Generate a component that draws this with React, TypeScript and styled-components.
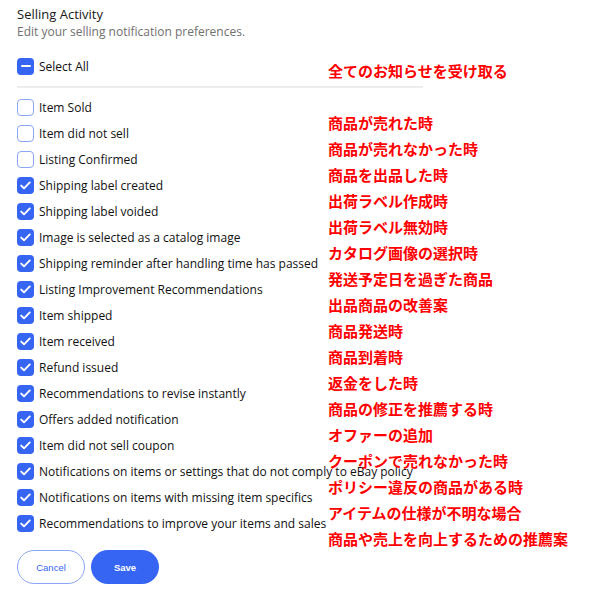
import React from 'react';
import styled, { createGlobalStyle } from 'styled-components';

const GlobalStyle = createGlobalStyle`
  body {
    margin: 0;
    background: #ffffff;
    font-family: "Open Sans", "Liberation Sans", sans-serif;
    color: #191919;
  }
`;

interface Option {
  label: string;
  note: string;
  checked: boolean;
}

const OPTIONS: Option[] = [
  { label: 'Item Sold', note: '商品が売れた時', checked: false },
  { label: 'Item did not sell', note: '商品が売れなかった時', checked: false },
  { label: 'Listing Confirmed', note: '商品を出品した時', checked: false },
  { label: 'Shipping label created', note: '出荷ラベル作成時', checked: true },
  { label: 'Shipping label voided', note: '出荷ラベル無効時', checked: true },
  { label: 'Image is selected as a catalog image', note: 'カタログ画像の選択時', checked: true },
  { label: 'Shipping reminder after handling time has passed', note: '発送予定日を過ぎた商品', checked: true },
  { label: 'Listing Improvement Recommendations', note: '出品商品の改善案', checked: true },
  { label: 'Item shipped', note: '商品発送時', checked: true },
  { label: 'Item received', note: '商品到着時', checked: true },
  { label: 'Refund issued', note: '返金をした時', checked: true },
  { label: 'Recommendations to revise instantly', note: '商品の修正を推薦する時', checked: true },
  { label: 'Offers added notification', note: 'オファーの追加', checked: true },
  { label: 'Item did not sell coupon', note: 'クーポンで売れなかった時', checked: true },
  { label: 'Notifications on items or settings that do not comply to eBay policy', note: 'ポリシー違反の商品がある時', checked: true },
  { label: 'Notifications on items with missing item specifics', note: 'アイテムの仕様が不明な場合', checked: true },
  { label: 'Recommendations to improve your items and sales', note: '商品や売上を向上するための推薦案', checked: true },
];

type BoxState = 'on' | 'off' | 'mixed';

const CheckBox = ({ state }: { state: BoxState }) => (
  <Box $state={state}>
    {state === 'on' && (
      <svg width="11" height="9" viewBox="0 0 11 9">
        <polyline points="1.2,4.6 4,7.3 9.8,1.4" fill="none" stroke="#fff" strokeWidth="1.9" strokeLinecap="round" strokeLinejoin="round" />
      </svg>
    )}
    {state === 'mixed' && <Dash />}
  </Box>
);

export default function App() {
  return (
    <>
      <GlobalStyle />
      <Panel>
        <Title>Selling Activity</Title>
        <Subtitle>Edit your selling notification preferences.</Subtitle>
        <SelectAllRow>
          <CheckBox state="mixed" />
          <Label>Select All</Label>
        </SelectAllRow>
        <Divider />
        <List>
          {OPTIONS.map((o) => (
            <Row key={o.label}>
              <CheckBox state={o.checked ? 'on' : 'off'} />
              <Label>{o.label}</Label>
            </Row>
          ))}
        </List>
        <Actions>
          <CancelButton>Cancel</CancelButton>
          <SaveButton>Save</SaveButton>
        </Actions>

        {/* red annotations laid over the list */}
        <Notes>
          <NoteHead>全てのお知らせを受け取る</NoteHead>
          {OPTIONS.map((o) => (
            <Note key={o.note}>{o.note}</Note>
          ))}
        </Notes>
      </Panel>
    </>
  );
}

const Panel = styled.div`
  position: relative;
  display: flex;
  flex-direction: column;

  width: 592px;
  height: 589px;
  padding: 5px 0 0 17px;
  box-sizing: border-box;
`;
const Title = styled.div`
  font-size: 13px;
  line-height: 18px;
  color: #191919;
`;
const Subtitle = styled.div`
  font-size: 12px;
  line-height: 17px;
  color: #707070;
`;
const SelectAllRow = styled.div`
  display: flex;
  align-items: center;
  gap: 5px;

  height: 26px;
  margin-top: 13px;
`;
const Divider = styled.div`
  width: 406px;
  height: 2px;
  margin-top: 7px;
  background: #ececec;
`;
const List = styled.div`
  display: flex;
  flex-direction: column;
  margin-top: 6px;
`;
const Row = styled.div`
  display: flex;
  align-items: center;
  gap: 5px;

  height: 26px;
`;
const Box = styled.div<{ $state: BoxState }>`
  display: flex;
  align-items: center;
  justify-content: center;
  flex-shrink: 0;

  width: 17px;
  height: 17px;
  box-sizing: border-box;
  border-radius: 4px;

  border: ${(p) => (p.$state === 'off' ? '1.5px solid #8aa6f7' : 'none')};
  background: ${(p) => (p.$state === 'off' ? '#ffffff' : '#3665f3')};
`;
const Dash = styled.div`
  width: 10px;
  height: 2px;
  border-radius: 1px;
  background: #ffffff;
`;
const Label = styled.span`
  font-size: 12px;
  color: #111111;
  white-space: nowrap;
`;
const Actions = styled.div`
  display: flex;
  gap: 6px;
  margin-top: 14px;
`;
const Pill = styled.button`
  width: 68px;
  height: 34px;
  border-radius: 17px;
  box-sizing: border-box;

  font-family: "Liberation Sans", sans-serif;
  font-size: 9.5px;
  cursor: pointer;
`;
const CancelButton = styled(Pill)`
  border: 1.5px solid #8aa6f7;
  background: #ffffff;
  color: #3665f3;
`;
const SaveButton = styled(Pill)`
  border: none;
  background: #3665f3;
  color: #ffffff;
  font-weight: bold;
`;
const Notes = styled.div`
  position: absolute;
  left: 328px;
  top: 58px;

  display: flex;
  flex-direction: column;

  font-family: "Noto Sans CJK JP", sans-serif;
  font-size: 15px;
  font-weight: 700;
  line-height: 26px;
  color: #ff0000;
`;
const NoteHead = styled.div`
  margin-bottom: 26px;
`;
const Note = styled.div``;
